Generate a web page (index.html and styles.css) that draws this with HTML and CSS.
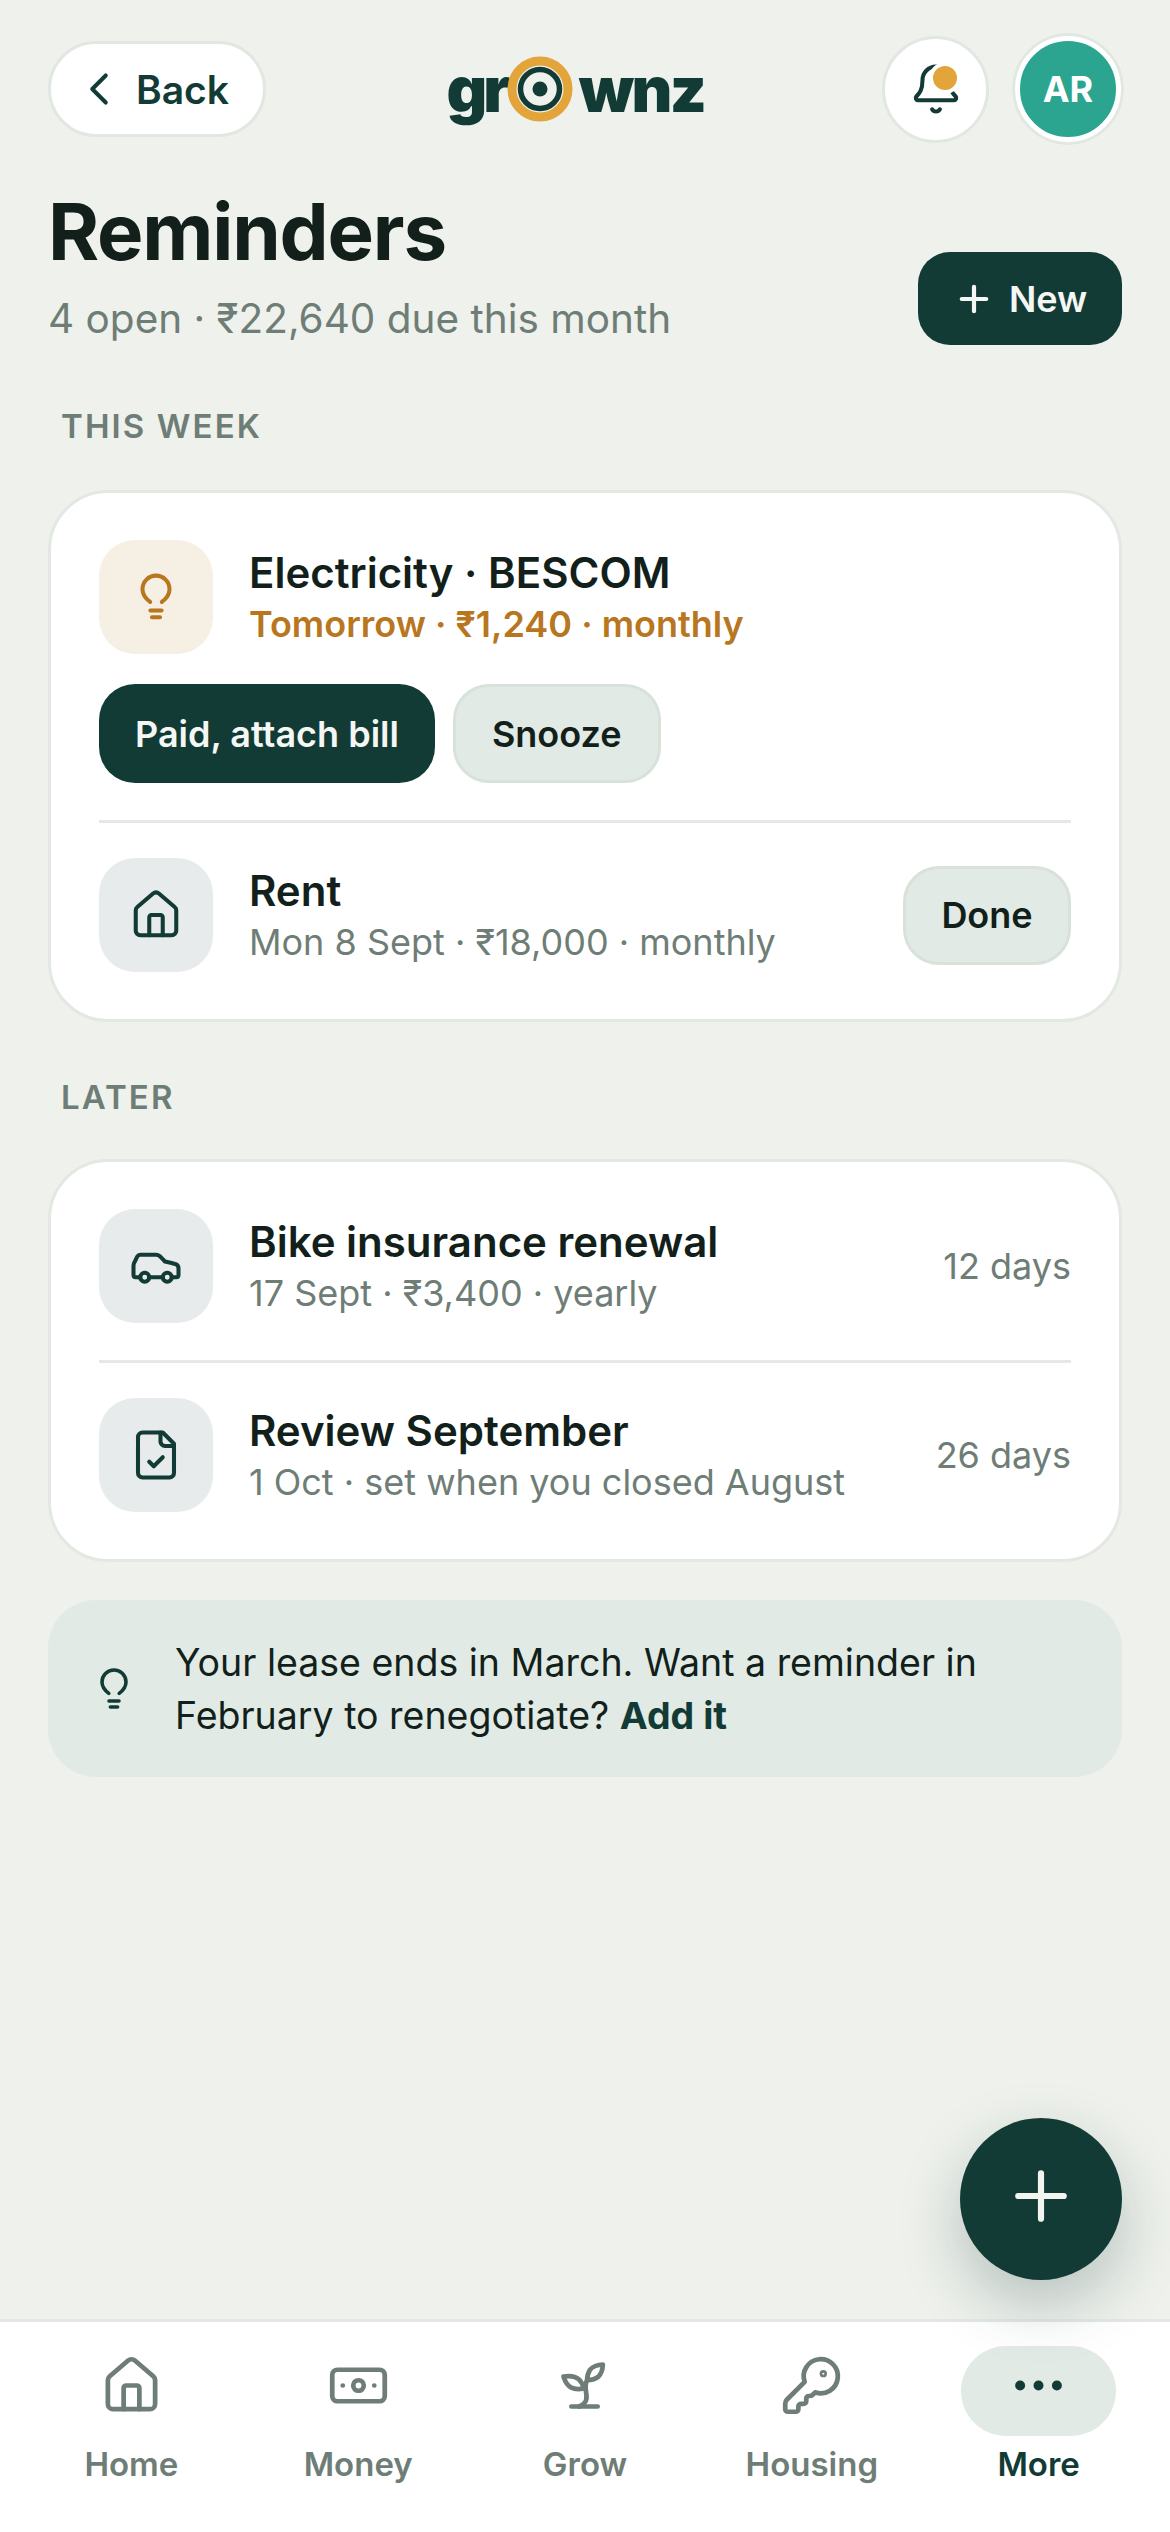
FILE: index.html
```html
<!DOCTYPE html>
<html lang="en">
<head>
<meta charset="utf-8">
<title>Reminders</title>
<link rel="stylesheet" href="styles.css">
</head>
<body>
<div class="app">
  <header class="topbar">
    <button class="back"><svg class="ic ic-54" viewBox="0 0 24 24"><path d="m15 18-6-6 6-6"/></svg><span>Back</span></button>
    <div class="logo"><span class="logo-gr">gr</span><svg class="logo-o" viewBox="0 0 66 66"><circle class="o1" cx="33" cy="33" r="28"/><circle class="o2" cx="33" cy="33" r="19.500"/><circle class="o3" cx="33" cy="33" r="7.500"/></svg><span>wnz</span></div>
    <div class="top-actions">
      <button class="bell"><svg class="ic ic-54" viewBox="0 0 24 24"><path d="M10.268 21a2 2 0 0 0 3.464 0"/><path d="M3.262 15.326A1 1 0 0 0 4 17h16a1 1 0 0 0 .74-1.673C19.41 13.956 18 12.499 18 8A6 6 0 0 0 6 8c0 4.499-1.411 5.956-2.738 7.326"/></svg><i class="bell-dot"></i></button>
      <div class="avatar"><span>AR</span></div>
    </div>
  </header>

  <main class="content">
    <section class="heading">
      <div>
        <h1>Reminders</h1>
        <p class="sub">4 open · ₹22,640 due this month</p>
      </div>
      <button class="new"><svg class="ic ic-42" viewBox="0 0 24 24"><path d="M5 12h14M12 5v14"/></svg><span>New</span></button>
    </section>

    <h2 class="label">THIS WEEK</h2>
    <section class="card">
      <div class="item">
        <div class="tile warm"><svg class="ic ic-54" viewBox="0 0 24 24"><path d="M9.400 14.200C7.300 12.600 6 11 6 8.500a6 6 0 0 1 12 0c0 2.500-1.300 4.100-3.400 5.700M9.500 18h5M10.200 21h3.600"/></svg></div>
        <div class="text">
          <div class="name">Electricity · BESCOM</div>
          <div class="meta amber">Tomorrow · ₹1,240 · monthly</div>
        </div>
      </div>
      <div class="actions">
        <button class="btn primary">Paid, attach bill</button>
        <button class="btn soft">Snooze</button>
      </div>
      <hr class="rule">
      <div class="item">
        <div class="tile"><svg class="ic ic-54" viewBox="0 0 24 24"><path d="M15 21v-8a1 1 0 0 0-1-1h-4a1 1 0 0 0-1 1v8"/><path d="M3 10a2 2 0 0 1 .709-1.528l7-5.999a2 2 0 0 1 2.582 0l7 5.999A2 2 0 0 1 21 10v9a2 2 0 0 1-2 2H5a2 2 0 0 1-2-2z"/></svg></div>
        <div class="text">
          <div class="name">Rent</div>
          <div class="meta">Mon 8 Sept · ₹18,000 · monthly</div>
        </div>
        <button class="btn soft done">Done</button>
      </div>
    </section>

    <h2 class="label later">LATER</h2>
    <section class="card">
      <div class="item">
        <div class="tile"><svg class="ic ic-54" viewBox="0 0 24 24"><path d="M19 17h2c.6 0 1-.4 1-1v-3c0-.9-.7-1.700-1.500-1.900C18.700 10.600 16 10 16 10s-1.300-1.400-2.200-2.300c-.5-.4-1.100-.7-1.800-.7H5c-.6 0-1.100.4-1.400.9l-1.400 2.900A3.700 3.700 0 0 0 2 12v4c0 .6.4 1 1 1h2"/><circle cx="7" cy="17" r="2"/><path d="M9 17h6"/><circle cx="17" cy="17" r="2"/></svg></div>
        <div class="text">
          <div class="name">Bike insurance renewal</div>
          <div class="meta">17 Sept · ₹3,400 · yearly</div>
        </div>
        <div class="days">12 days</div>
      </div>
      <hr class="rule">
      <div class="item">
        <div class="tile"><svg class="ic ic-54" viewBox="0 0 24 24"><path d="M15 2H6a2 2 0 0 0-2 2v16a2 2 0 0 0 2 2h12a2 2 0 0 0 2-2V7Z"/><path d="M14 2v4a2 2 0 0 0 2 2h4"/><path d="m9 15 2 2 4-4"/></svg></div>
        <div class="text">
          <div class="name">Review September</div>
          <div class="meta">1 Oct · set when you closed August</div>
        </div>
        <div class="days">26 days</div>
      </div>
    </section>

    <section class="tip">
      <svg class="ic ic-48" viewBox="0 0 24 24"><path d="M9.400 14.200C7.300 12.600 6 11 6 8.500a6 6 0 0 1 12 0c0 2.500-1.300 4.100-3.400 5.700M9.500 18h5M10.200 21h3.600"/></svg>
      <p>Your lease ends in March. Want a reminder in February to renegotiate? <b>Add it</b></p>
    </section>
  </main>

  <button class="fab"><svg class="ic ic-78" viewBox="0 0 24 24"><path d="M5 12h14M12 5v14"/></svg></button>

  <nav class="tabs">
    <a class="tab"><span class="tab-ic"><svg class="ic ic-63" viewBox="0 0 24 24"><path d="M15 21v-8a1 1 0 0 0-1-1h-4a1 1 0 0 0-1 1v8"/><path d="M3 10a2 2 0 0 1 .709-1.528l7-5.999a2 2 0 0 1 2.582 0l7 5.999A2 2 0 0 1 21 10v9a2 2 0 0 1-2 2H5a2 2 0 0 1-2-2z"/></svg></span><span>Home</span></a>
    <a class="tab"><span class="tab-ic"><svg class="ic ic-63" viewBox="0 0 24 24"><rect x="2" y="6" width="20" height="12" rx="2"/><circle cx="12" cy="12" r="2"/><path d="M6 12h.01M18 12h.01"/></svg></span><span>Money</span></a>
    <a class="tab"><span class="tab-ic"><svg class="ic ic-63" viewBox="0 0 24 24"><path d="M7 20h10"/><path d="M10 20c5.500-2.500.8-6.400 3-10"/><path d="M9.500 9.400c1.100.8 1.800 2.200 2.300 3.700-2 .4-3.500.4-4.800-.3-1.200-.6-2.300-1.900-3-4.200 2.800-.5 4.400 0 5.500.8z"/><path d="M14.100 6a7 7 0 0 0-1.100 4c1.900-.1 3.300-.6 4.300-1.400 1-1 1.600-2.300 1.700-4.600-2.700.1-4 1-4.900 2z"/></svg></span><span>Grow</span></a>
    <a class="tab"><span class="tab-ic"><svg class="ic ic-63" viewBox="0 0 24 24"><path d="M2.586 17.414A2 2 0 0 0 2 18.828V21a1 1 0 0 0 1 1h3a1 1 0 0 0 1-1v-1a1 1 0 0 1 1-1h1a1 1 0 0 0 1-1v-1a1 1 0 0 1 1-1h.172a2 2 0 0 0 1.414-.586l.814-.814a6.500 6.500 0 1 0-4-4z"/><circle cx="16.500" cy="7.500" r=".5"/></svg></span><span>Housing</span></a>
    <a class="tab active"><span class="tab-ic"><svg class="ic ic-63 dots" viewBox="0 0 24 24"><circle cx="5" cy="12" r="1.900"/><circle cx="12" cy="12" r="1.900"/><circle cx="19" cy="12" r="1.900"/></svg></span><span>More</span></a>
  </nav>
</div>
</body>
</html>
```

FILE: styles.css
```css
* { box-sizing: border-box; }
html, body { margin: 0; padding: 0; }
body { font-family: Inter, "Noto Sans", sans-serif; color: #121f1b; background: #eef1ec; }
button { font: inherit; color: inherit; cursor: pointer; }
h1, h2, p { margin: 0; }

.app { position: relative; width: 1170px; height: 2532px; display: flex; flex-direction: column; overflow: hidden; background: #eef1ec; }

.ic { display: block; fill: none; stroke: currentColor; stroke-width: 1.8; stroke-linecap: round; stroke-linejoin: round; flex: none; }
.ic-42 { width: 42px; height: 42px; stroke-width: 2.4; }
.ic-48 { width: 48px; height: 48px; }
.ic-54 { width: 54px; height: 54px; }
.ic-63 { width: 63px; height: 63px; }
.ic-78 { width: 78px; height: 78px; stroke-width: 1.9; }

.topbar { display: flex; align-items: center; justify-content: space-between; padding: 33px 46px 0 48px; height: 145px; }
.back { display: flex; align-items: center; gap: 10px; width: 218px; height: 96px; padding: 0 0 0 21px; background: #fff; border: 3px solid #e1e7e1; border-radius: 48px; color: #133b36; font-size: 39px; font-weight: 600; }
.logo { display: flex; align-items: center; margin-left: 3px; color: #133b36; font-size: 63px; font-weight: 900; line-height: 1; letter-spacing: -2.500px; }
.logo-gr { letter-spacing: -4px; }
.logo-o { width: 66px; height: 66px; margin: 0 6px 0 0; fill: none; }
.o1 { stroke: #e3a53a; stroke-width: 9; }
.o2 { stroke: #133b36; stroke-width: 5.500; }
.o3 { fill: #133b36; }
.top-actions { display: flex; align-items: center; gap: 23px; }
.bell { position: relative; display: flex; align-items: center; justify-content: center; width: 107px; height: 107px; padding: 0; background: #fff; border: 3px solid #e1e7e1; border-radius: 50%; color: #133b36; }
.bell-dot { position: absolute; top: 23px; left: 44px; width: 32px; height: 32px; background: #e3a53a; border: 4px solid #fff; border-radius: 50%; }
.avatar { display: flex; align-items: center; justify-content: center; width: 112px; height: 112px; background: #2ca590; border: 8px solid #fff; border-radius: 50%; outline: 3px solid #e1e7e1; outline-offset: -3px; color: #fff; font-size: 36px; font-weight: 700; }

.content { flex: 1; padding: 0 48px; }
.heading { display: flex; align-items: flex-end; justify-content: space-between; margin-top: 44px; }
h1 { font-size: 78px; line-height: 86px; font-weight: 700; letter-spacing: -1.200px; }
.sub { margin-top: 16px; color: #6e7d76; font-size: 40.500px; line-height: 56px; }
.new { display: flex; align-items: center; gap: 14px; width: 204px; height: 93px; padding: 0 0 0 35px; margin-bottom: 2px; background: #133b36; border: 0; border-radius: 32px; color: #f4f7f3; font-size: 36px; font-weight: 600; }

.label { margin: 56px 0 0 13px; color: #6e7d76; font-size: 33px; line-height: 46px; font-weight: 600; letter-spacing: 2.100px; }
.label.later { margin-top: 52px; }
.card { margin-top: 41px; padding: 47px 48px; background: #fff; border: 3px solid #e3e8e3; border-radius: 60px; }
.label.later + .card { margin-top: 39px; }
.item { display: flex; align-items: center; gap: 36px; }
.tile { display: flex; align-items: center; justify-content: center; flex: none; width: 114px; height: 114px; background: #e7ebeb; border-radius: 36px; color: #133b36; }
.tile.warm { background: #f6efe4; color: #b8761f; }
.text { flex: 1; min-width: 0; padding-top: 2px; }
.name { font-size: 42px; line-height: 50px; font-weight: 600; }
.meta { margin-top: 2px; color: #6e7d76; font-size: 36px; line-height: 48px; }
.meta.amber { color: #b8761f; font-weight: 600; }
.actions { display: flex; gap: 18px; margin-top: 30px; }
.btn { height: 99px; padding: 0 36px; border-radius: 36px; font-size: 36px; font-weight: 600; }
.btn.primary { background: #133b36; border: 0; color: #f4f7f3; }
.btn.soft { background: #e1eae4; border: 3px solid #d8e2db; }
.btn.done { width: 168px; padding: 0; }
.rule { height: 3px; margin: 37px 0 35px; background: #e5e9e5; border: 0; }
.days { color: #6e7d76; font-size: 36px; }

.tip { display: flex; align-items: center; gap: 37px; margin-top: 38px; padding: 0 42px; height: 177px; background: #e1eae4; border-radius: 48px; color: #133b36; }
.tip p { color: #121f1b; font-size: 37.500px; line-height: 53px; }
.tip b { color: #133b36; font-weight: 700; }

.fab { position: absolute; left: 960px; top: 2118px; display: flex; align-items: center; justify-content: center; width: 162px; height: 162px; padding: 0 0 6px; background: #133b36; border: 0; border-radius: 50%; color: #f2f4ef; box-shadow: 0 24px 60px rgba(19, 59, 54, .25); }

.tabs { flex: none; display: grid; grid-template-columns: repeat(5, 1fr); height: 213px; padding: 24px 18px 0; background: #fff; border-top: 3px solid #e3e8e3; }
.tab { display: flex; flex-direction: column; align-items: center; color: #6e7d76; font-size: 33px; font-weight: 600; }
.tab-ic { display: flex; align-items: center; justify-content: center; width: 155px; height: 90px; padding-bottom: 12px; margin-bottom: 8px; border-radius: 45px; }
.tab.active { color: #133b36; }
.tab.active .tab-ic { background: #e1eae4; }
.dots circle { fill: currentColor; stroke: none; }
```
